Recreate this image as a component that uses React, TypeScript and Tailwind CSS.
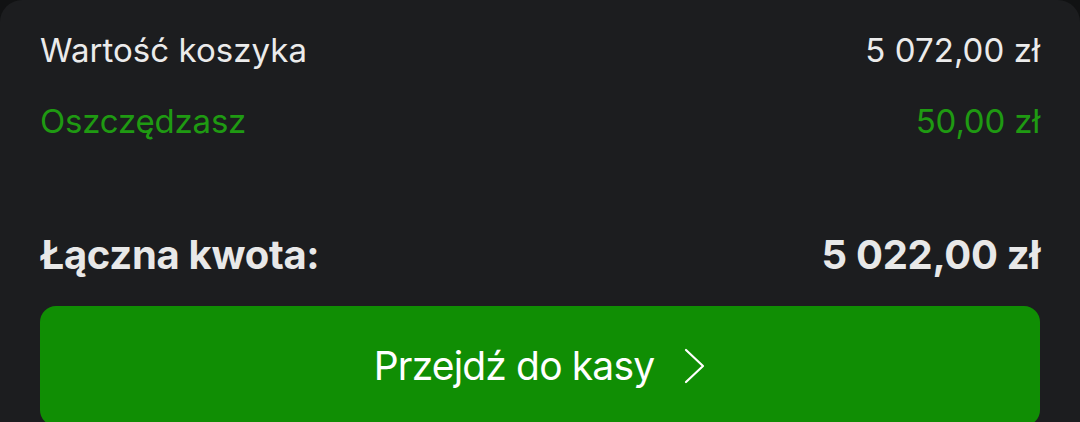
import React from "react";

export default function App() {
  return (
    <div className="w-[1080px] h-[422px] bg-[#111213] overflow-hidden" style={{ fontFamily: "Inter, 'Noto Sans', sans-serif" }}>
      <div className="h-full rounded-t-[22px] bg-[#1c1d1f] px-[40px] pt-[30px] flex flex-col">
        <div className="flex justify-between items-center h-[40px] leading-[40px] text-[33px] text-[#ebebeb] tracking-[0.05px]">
          <span>Wartość koszyka</span>
          <span>5 072,00 zł</span>
        </div>
        <div className="mt-[31px] flex justify-between items-center h-[40px] leading-[40px] text-[33px] text-[#1f9a12] tracking-[-0.2px]">
          <span>Oszczędzasz</span>
          <span>50,00 zł</span>
        </div>
        <div className="mt-[89px] flex justify-between items-center h-[50px] leading-[50px] text-[40px] font-bold text-[#e8e8e8] tracking-[-0.3px]">
          <span>Łączna kwota:</span>
          <span>5 022,00 zł</span>
        </div>
        <div className="mt-[26px] h-[120px] shrink-0 rounded-[16px] bg-[#108e04] flex items-center justify-center gap-[30px]">
          <span className="text-[39px] leading-[48px] text-white tracking-[-0.85px]">Przejdź do kasy</span>
          <svg width="22" height="36" viewBox="0 0 22 36" fill="none">
            <polyline points="2,2 19,18 2,34" stroke="white" strokeWidth="2.2" strokeLinecap="round" strokeLinejoin="round" />
          </svg>
        </div>
      </div>
    </div>
  );
}
